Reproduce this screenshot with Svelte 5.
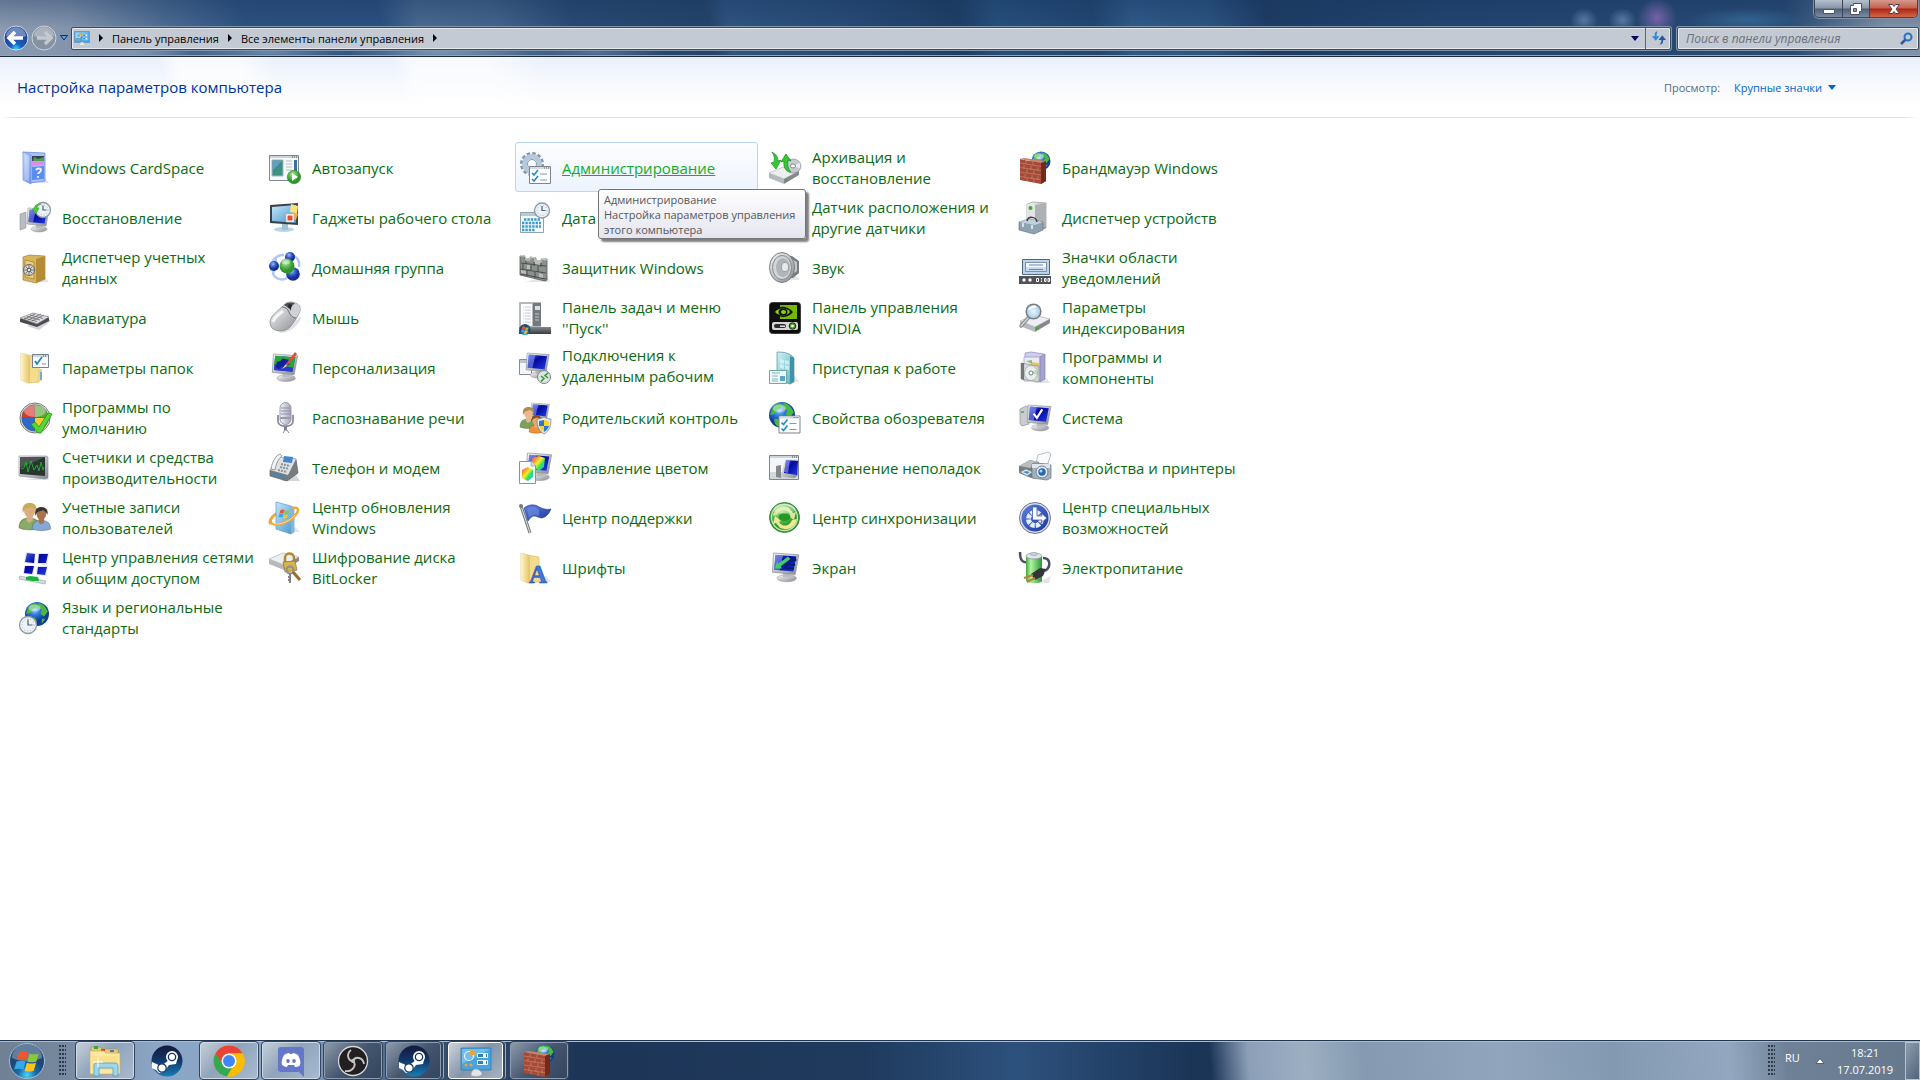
<script>
    const applets = [
        ["cardspace", "Windows CardSpace"],
        ["autoplay", "Автозапуск"],
        ["admin", "Администрирование"],
        ["backup", "Архивация и\nвосстановление"],
        ["firewall", "Брандмауэр Windows"],
        ["recovery", "Восстановление"],
        ["gadgets", "Гаджеты рабочего стола"],
        ["date", "Дата"],
        ["sensor", "Датчик расположения и\nдругие датчики"],
        ["devmgr", "Диспетчер устройств"],
        ["vault", "Диспетчер учетных\nданных"],
        ["homegroup", "Домашняя группа"],
        ["defender", "Защитник Windows"],
        ["sound", "Звук"],
        ["tray", "Значки области\nуведомлений"],
        ["keyboard", "Клавиатура"],
        ["mouse", "Мышь"],
        ["startmenu", "Панель задач и меню\n''Пуск''"],
        ["nvidia", "Панель управления\nNVIDIA"],
        ["indexing", "Параметры\nиндексирования"],
        ["folders", "Параметры папок"],
        ["personal", "Персонализация"],
        ["remote", "Подключения к\nудаленным рабочим"],
        ["welcome", "Приступая к работе"],
        ["programs", "Программы и\nкомпоненты"],
        ["defaults", "Программы по\nумолчанию"],
        ["speech", "Распознавание речи"],
        ["parental", "Родительский контроль"],
        ["internet", "Свойства обозревателя"],
        ["system", "Система"],
        ["perf", "Счетчики и средства\nпроизводительности"],
        ["phone", "Телефон и модем"],
        ["color", "Управление цветом"],
        ["trouble", "Устранение неполадок"],
        ["printers", "Устройства и принтеры"],
        ["users", "Учетные записи\nпользователей"],
        ["update", "Центр обновления\nWindows"],
        ["action", "Центр поддержки"],
        ["sync", "Центр синхронизации"],
        ["access", "Центр специальных\nвозможностей"],
        ["network", "Центр управления сетями\nи общим доступом"],
        ["bitlocker", "Шифрование диска\nBitLocker"],
        ["fonts", "Шрифты"],
        ["display", "Экран"],
        ["power", "Электропитание"],
        ["region", "Язык и региональные\nстандарты"],
    ];

    const tasks = [
        ["explorer", "Проводник", "light"],
        ["steam", "Steam", "flat"],
        ["chrome", "Google Chrome", "light"],
        ["discord", "Discord", "light"],
        ["obs", "OBS Studio", "dark"],
        ["steam", "Steam", "dark stack"],
        ["control", "Панель управления", "active stack"],
        ["firewall", "Брандмауэр Windows", "dark"],
    ];

    // shared icon parts
    const monitor = (x, y, s, extra = "") => `<g transform="translate(${x} ${y}) scale(${s})">
        <ellipse cx="14" cy="21" rx="8" ry="3" fill="url(#silver)" stroke="#999" stroke-width=".5"/>
        <path d="M11 15h6v5h-6z" fill="#b8bcc2"/>
        <path d="M3 0 24 1.500 21 18 2 16z" fill="url(#silver)" stroke="#8d9299" stroke-width=".6"/>
        <path d="M4.500 1.500 22 3 19.500 15.500 3.500 14z" fill="url(#screen)"/>
        <path d="M4.500 1.500 11 2 8 14.300 3.500 14z" fill="#9db4ff" opacity=".5"/>${extra}</g>`;
    const globe = (cx, cy, r) => `<g transform="translate(${cx} ${cy}) scale(${r / 10})">
        <circle r="10" fill="url(#globe)"/>
        <path d="M-7-6c2-3 6-3 7-2l-1 3-3 1-1 3-4 1zM1-9c4 0 7 4 8 7l-3 4-3-2 1-4-3-1zM-6 3l4 0 2 3-3 3c-2-1-3-3-3-6zM4 4l3 0-3 4z" fill="#49b93f"/>
        <ellipse cx="-2" cy="-5" rx="5" ry="3" fill="#fff" opacity=".4"/></g>`;
    const clock = (cx, cy, r) => `<circle cx="${cx}" cy="${cy}" r="${r}" fill="#edf3f8" stroke="#8d9aa6" stroke-width="1.300"/>
        <circle cx="${cx}" cy="${cy}" r="${r - 2.5}" fill="none" stroke="#9fb0bf" stroke-width="1" stroke-dasharray="1 2"/>
        <path d="M${cx} ${cy - r + 3}V${cy}H${cx + r - 4}" fill="none" stroke="#4b5f73" stroke-width="1.200"/>`;
    const checklist = (x, y) => `<g transform="translate(${x} ${y})">
        <path d="M.5.5h21v17H.5z" fill="#fdfefe" stroke="#7c858f"/>
        <path d="M1 1h20v2H1z" fill="#d4dbe3"/><path d="M15 2h1m1 0h1m1 0h1" stroke="#667"/>
        <path d="M3 7l2 2 4-5M3 13l2 2 4-5" fill="none" stroke="#1e8fc4" stroke-width="1.600"/>
        <path d="M11 8h7M11 14h7" stroke="#8b8fb0" stroke-width="1.200"/></g>`;
    const folder = `<path d="M2 1l7 2v28l-7-3z" fill="url(#folder)" stroke="#d3b45f" stroke-width=".6"/>
        <path d="M9 3l11 2v25l-11 1z" fill="#f3dc8c" stroke="#d3b45f" stroke-width=".6"/>
        <path d="M2 1l5 1 4 3v25l-2 1-7-3z" fill="url(#folder)"/>`;
    const wall = `<path d="M1 7l9 2 17 1v19l-5 3L1 28z" fill="#a54a36"/>
        <path d="M1 7l4-1 22 3-5 2z" fill="#c98370"/><path d="M22 11l5-2v20l-5 3z" fill="#74291c"/>
        <path d="M1 11l21 3.500M1 15.500l21 3M1 20l21 3M1 24.500l21 3.200M7 8v4m7-3v4m-9 0v4m7-3v4m7-3v4M8 17v4m7-3v4m-9 0v4m7-3v4m6-3v4M8 26v3m7-2v4" stroke="#d89e8c" stroke-width=".6" opacity=".8" fill="none"/>`;
    const flag = (x, y, s) => `<g transform="translate(${x} ${y}) scale(${s})">
        <path d="M1 2c3-2 5-1 8 0L7 9C5 8 3 8-1 9z" fill="#f0562c"/><path d="M10 3c3 1 5 1 8 0l-2 7c-3 1-5 1-8 0z" fill="#8cc63f"/>
        <path d="M-1.300 10c3-1 5-1 8 0l-2 7c-3-1-5-1-8 0z" fill="#35a7e8"/><path d="M7.700 11c3 1 5 1 8 0l-2 7c-3 1-5 1-8 0z" fill="#fcc321"/></g>`;
    const drive = (x, y) => `<g transform="translate(${x} ${y})"><path d="M0 8L14 2l16 4-15 8z" fill="#eceef0" stroke="#a6a9ad" stroke-width=".6"/>
        <path d="M0 8l15 6v5L0 13z" fill="#b5b8bd"/><path d="M15 14l15-8v4l-15 9z" fill="#85898e"/><path d="M16 15l3-1v2l-3 1z" fill="#3fae2a"/></g>`;
    const person = (x, y, s, hair, skin, shirt) => `<g transform="translate(${x} ${y}) scale(${s})">
        <path d="M0 20c0-6 3-8 8-8s9 2 9 8c-4 2-13 2-17 0z" fill="${shirt}" stroke="#0003"/>
        <path d="M6 9h5v5l-3 2-2-2z" fill="${skin}"/><ellipse cx="8.500" cy="6" rx="4.500" ry="5.500" fill="${skin}"/>
        <path d="M3 8C2 2 5 0 8.500 0S15 2 14 7c-1-2-2-3-4-4-3 1-5 1-6 3z" fill="${hair}"/></g>`;

    const icons = {
        cardspace: `<path d="M8 31h22l-4-6z" fill="#bbb" opacity=".4"/><path d="M4 0l22 1v28l-15 2z" fill="#a9c3f7" stroke="#5c7fd8" stroke-width=".7"/>
            <path d="M13 4l12 0v5l-12 0z" fill="#39405f"/><path d="M15 5l4 2 6-2v4H14z" fill="#4ba24b"/><path d="M13 9h12v4l-12 1z" fill="#df8bea"/>
            <path d="M13 15l12-1v13l-12 1z" fill="#5b8cf0"/><path d="M17 18c1-2 5-2 5 0s-3 3-3 4m0 2v2" stroke="#eef" stroke-width="1.800" fill="none"/>
            <path d="M4 0l8 3v29l-8-4z" fill="url(#pane)" stroke="#6f90de" stroke-width=".7"/><path d="M6 3l4 2v24l-4-2z" fill="#fff" opacity=".25"/>`,
        autoplay: `<path d="M.500 3.500h29v25H.500z" fill="#f7f8f9" stroke="#7e868e"/><path d="M1 4h28v2H1z" fill="#ccd3da"/><path d="M23 5h1m1 0h1m1 0h1" stroke="#445"/>
            <path d="M3 8h11v16H3z" fill="#3f8f82" stroke="#9fb6c9"/><path d="M4 9h9L4 18z" fill="#5e9fd0"/><path d="M17 9h6M17 12h6M17 15h6M17 18h6" stroke="#b5bcc4"/>
            <path d="M25 8h3v12h-3z" fill="#3b6ea5"/><circle cx="25" cy="25" r="6.700" fill="url(#green)" stroke="#2c8c1c" stroke-width=".6"/><path d="M23 21l6 4-6 4z" fill="#fff"/>`,
        admin: `<circle cx="13" cy="12" r="9" fill="none" stroke="#7f95ad" stroke-width="6" stroke-dasharray="3 1.700"/><circle cx="13" cy="12" r="7.500" fill="none" stroke="#b7c8da" stroke-width="5"/>
            <circle cx="13" cy="12" r="4.500" fill="#fafcff" stroke="#8296ab"/>${checklist(10, 14)}`,
        backup: `${drive(0, 13)}<ellipse cx="24" cy="14" rx="8" ry="7" fill="#c6c9cf" stroke="#85898f" stroke-width=".6"/><path d="M24 14l7-3v5z" fill="#eef0f3"/><ellipse cx="24" cy="14" rx="2.500" ry="2" fill="#fff" stroke="#888"/>
            <path d="M3 0c4 2 6 5 6 9l3-1-5 9-5-6 3-1c1-4 0-7-2-10z" fill="#35c735" stroke="#158a1b" stroke-width=".7"/><path d="M12 10l5-8 5 7-3-1c-1 5 0 9 3 12-5 0-8-5-7-11z" fill="#35c735" stroke="#158a1b" stroke-width=".7"/>`,
        firewall: `${globe(22, 9, 9.5)}${wall}`,
        recovery: `<path d="M1 12l6-2v16l-6 2z" fill="#b8bcc2" stroke="#888" stroke-width=".5"/><g>${monitor(6, 6, 1)}</g>${clock(24, 8, 7.5)}
            <path d="M22 2c-6 0-7 3-7 5h-2l4 5 3-6h-2c0-2 1-3 4-4z" fill="#4fc934" stroke="#279a1a" stroke-width=".5"/>`,
        gadgets: `<ellipse cx="15" cy="27.500" rx="10" ry="2.500" fill="#bcd5e6"/><path d="M13 22h6v6h-6z" fill="#9fc2d8"/><path d="M1 3l28-2v22L1 21z" fill="#39414b"/><path d="M3 5l24-2v18L3 19z" fill="url(#sky)"/>
            <path d="M22 2l7 2-1 8-7-2z" fill="#ffdf7a"/><path d="M24 10l5 2-2 6-5-2z" fill="#f0ac62"/><path d="M17 12h8v8h-8z" fill="#fff" stroke="#aaa" stroke-width=".5"/><path d="M18.500 13.500h5v5h-5z" fill="#e2502c"/>`,
        date: `<path d="M1.500 10.500h23v20h-23z" fill="#f5fafd" stroke="#8ea4b2"/><path d="M2 11h22v3H2z" fill="#b9cad5"/>
            <path d="M5 17.500h17M3 21h19M3 24.500h19M3 28h13" stroke="#3c9ad0" stroke-width="2.600" stroke-dasharray="2.400 1"/>${clock(23, 8.5, 7.5)}`,
        sensor: `<circle cx="16" cy="16" r="12" fill="url(#globe)"/>`,
        devmgr: `<path d="M8 2l6-2 13 1v25l-6 2-13-3z" fill="url(#silver)" stroke="#888" stroke-width=".6"/><path d="M8 2l8 1v22l-8-2z" fill="#e2e4e6"/><path d="M16 3l11-2v24l-11 2z" fill="#aeb1b5"/>
            <circle cx="11.500" cy="6" r="2" fill="#3fae2a"/><path d="M0 20l10-3 14 3v8l-9 4-15-4z" fill="#8ea3b1" stroke="#546b7a" stroke-width=".6"/>
            <path d="M0 20l10-3 14 3-8 3z" fill="#c2d1da"/><path d="M8 19c1-5 9-5 10 1" fill="none" stroke="#3b4247" stroke-width="1.500"/><path d="M4 21v4m9-2v4" stroke="#eef" stroke-width="1.600"/>`,
        vault: `<path d="M10 30h20l-4-5z" fill="#bbb" opacity=".4"/><path d="M4 5l6-2 16 1v23l-9 4-13-3z" fill="#d8b45a" stroke="#94742c" stroke-width=".6"/><path d="M17 7l9-3v23l-9 4z" fill="#b38c35"/>
            <path d="M6 8l9 2v17l-9-2z" fill="#e9cc7c" stroke="#8e7030" stroke-width=".6"/><circle cx="10" cy="18" r="5.500" fill="#d4d4d0" stroke="#666" stroke-width="1"/><path d="M10 13v10M5 18h10M7 15l6 6m0-6l-6 6" stroke="#666" stroke-width=".8"/><circle cx="10" cy="18" r="1.800" fill="#eee" stroke="#555"/>`,
        homegroup: `<path d="M15 3a12 12 0 0 0-12 16M7 6l-3 16c4 7 11 6 14 4M20 3c8 0 11 6 10 12" fill="none" stroke="#b2c7f0" stroke-width="2.500"/>
            <circle cx="21" cy="5" r="5" fill="url(#ball)"/><circle cx="5" cy="14" r="5" fill="url(#ball)"/><circle cx="24" cy="22" r="6.800" fill="url(#ball)"/><circle cx="18" cy="14" r="7.500" fill="url(#green)"/><ellipse cx="17" cy="10" rx="4" ry="2.500" fill="#fff" opacity=".45"/>`,
        defender: `<path d="M6 30h25l-3-6z" fill="#bbb" opacity=".4"/><path d="M1 4h5v3h5V5l6 1v3h5V7h6v21l-2 1L1 23z" fill="#8b918c" stroke="#454b49" stroke-width=".7"/>
            <path d="M1 4h4l2 1v3h4V5l5 1v4h6V7l6 1" fill="none" stroke="#d3d8d2"/><path d="M2 11l25 3M1 17l26 4M2 22l25 5M7 9v3m8-2v4m7-3v4M4 12v5m8-4v5m7-4v6M8 18v6m8-4v6m7-5v6" stroke="#414846" stroke-width=".9" fill="none"/>
            <path d="M8 13l3 0v4l-3 0zM16 8l5 1v4l-5-1zM2 18l5 1v3l-5-1zM20 21l4 1v4l-4-1z" fill="#b9beb8"/>`,
        sound: `<path d="M12 28h19l-6-6z" fill="#bbb" opacity=".4"/><path d="M15 4h8l7 5v12l-6 5h-8z" fill="#777c80"/><path d="M20 6l8 4v9l-6 4z" fill="#c3c7ca"/><ellipse cx="13" cy="15.500" rx="12.500" ry="15" fill="url(#silver)" stroke="#777c80"/>
            <ellipse cx="13" cy="15.500" rx="9.500" ry="12" fill="#d3d7da" stroke="#868b90"/><ellipse cx="14" cy="15.500" rx="7" ry="9.500" fill="#aeb4b9"/><ellipse cx="16" cy="15" rx="3.500" ry="4.500" fill="#e7eaec" stroke="#7d8388" stroke-width=".6"/>`,
        tray: `<path d="M3.500 7.500h27v15h-27z" fill="#bed3ea" stroke="#50677e"/><path d="M6.500 10.500h21v9h-21z" fill="#f6fafd" stroke="#7890a8"/><path d="M7 15h20v4H7z" fill="#c6dcf2"/><path d="M10 13h14M10 17.500h14" stroke="#5d86b2"/>
            <path d="M0 24h32v8H0z" fill="#4f5356"/><circle cx="5" cy="28" r="1.700" fill="#fff"/><circle cx="11" cy="28" r="1.700" fill="#fff"/><path d="M17.500 26.500h2v3h-2zM25.500 26.500h1.500v3h-1.500zM29 26.500h1.500v3H29z" fill="none" stroke="#fff"/><path d="M22.500 26v1.500m0 1v1.500" stroke="#fff" stroke-width="1.200"/>`,
        keyboard: `<path d="M8 24l12 4 12-9-2-2z" fill="#aaa" opacity=".5"/><path d="M1 17l13-5 16 4v3L18 25 1 20z" fill="#4b4c50"/><path d="M1 16l13-5 16 4-12 7z" fill="#dddee1" stroke="#6c6d70" stroke-width=".6"/>
            <path d="M5 16l13 3.500M8 14.500l13 3.500M11 13l13 3.500M9 18l13-6m-9 7l12-6M5 17l11-5" stroke="#66686d" stroke-width=".8"/>`,
        mouse: `<path d="M8 28c8 0 17-5 23-14l1 3c-5 9-13 14-20 14z" fill="#aaa" opacity=".35"/><path d="M1 20C1 14 9 9 14 4c3-4 8-5 12-3 4 1 6 4 5 8-2 6-6 11-9 15-4 5-11 6-16 4-3-1-5-4-5-8z" fill="url(#silver)" stroke="#7b7e83" stroke-width=".7"/>
            <path d="M14 4c4-4 8-4 12-3 4 2 6 4 5 8-1 3-3 5-4 7-4 0-5-3-7-6-1-2-5-3-6-6z" fill="#cfd1d4"/><path d="M13 5c3 0 6 2 7 5s4 6 7 6" fill="none" stroke="#66696e" stroke-width="1"/>
            <path d="M15 3c3-3 7-3 11-2l-4 4 0 4c-2-3-4-4-7-6z" fill="#4a4c51"/><path d="M20 2l3 1-1 4-3-2z" fill="#25262a"/>
            <path d="M4 20c1-5 6-8 10-11" fill="none" stroke="#fff" stroke-width="3" opacity=".8"/>`,
        startmenu: `<path d="M0 0h22v26H0z" fill="#b5babf"/><path d="M2 2h11v22H2z" fill="#fff"/><path d="M4 5h1m1 0h6M4 8h1m1 0h6M4 11h1m1 0h6M4 14h1m1 0h6M4 17h1m1 0h6M4 20h1m1 0h6" stroke="#b3bad4" stroke-width=".8"/>
            <path d="M14 1h8v23h-8z" fill="#74797d"/><path d="M16 4h5v4h-5z" fill="#dcdfe2"/><path d="M16 12h4M16 15h4M16 18h4" stroke="#d9dcde" stroke-width=".8"/><path d="M0 25h32v7H0z" fill="url(#dark)"/>
            <circle cx="6" cy="27.500" r="5.500" fill="url(#orb)"/>${flag(3, 24, 0.38)}`,
        nvidia: `<rect x=".5" y=".5" width="31" height="31" rx="3" fill="#0c0d0c" stroke="#3c3e3c"/><path d="M3 4h24v13H3z" fill="#111"/><path d="M11 3h17v14H11z" fill="#76b900"/>
            <path d="M4 10c3-4 7-6 12-5 4 1 6 3 8 5-3 4-7 5-11 5-4-1-7-3-9-5z" fill="#0e130a"/><path d="M6 10c3-4 11-5 15 0-4 5-11 4-15 0z" fill="#8fd117"/><ellipse cx="14" cy="10" rx="4.500" ry="3.500" fill="#0e130a"/><ellipse cx="14.500" cy="10" rx="2.500" ry="1.900" fill="#8fd117"/>
            <rect x="3" y="20" width="26" height="8" rx="2" fill="#d5d8d6"/><rect x="5" y="22" width="12" height="4" rx="2" fill="#2b2d2b"/><path d="M11 23.500h5v1.500h-5z" fill="#ddd"/><circle cx="23.500" cy="24" r="3.300" fill="#4da32a" stroke="#222"/><circle cx="23.500" cy="24" r="1.300" fill="#fff"/>`,
        indexing: `${drive(1, 11)}<path d="M10 15l-8 9" stroke="#84878c" stroke-width="3.500" stroke-linecap="round"/><path d="M10 15l-8 9" stroke="#d4d6d9" stroke-width="1.500" stroke-linecap="round"/>
            <circle cx="14.500" cy="9.500" r="7.300" fill="url(#lens)" stroke="#777c82" stroke-width="1.500"/><path d="M10 8c1-3 5-4 7-3" stroke="#fff" stroke-width="2" fill="none"/>`,
        folders: `${folder}<path d="M13.500 2.500h16v13h-16z" fill="#fbfcfd" stroke="#75818d"/><path d="M14 3h15v2H14z" fill="#cfd8e0"/><path d="M24 4h1m1 0h1" stroke="#445"/><path d="M16 9l2 3 5-7" fill="none" stroke="#1f88c2" stroke-width="1.800"/><path d="M23 12h4" stroke="#888"/>
            <path d="M20 17h3v11l-5 3" fill="#eed27e"/><path d="M22 20v8" stroke="#5aa0dc" stroke-width="1.500"/>`,
        personal: `${monitor(1, 2, 1.15, `<path d="M4.500 1.500L22 3l-2 10L3.500 10z" fill="#25a836"/><path d="M4 9l16 3-.500 3.500L3.500 14z" fill="#2b3bd0"/><path d="M6 7l3-1 2-2 5 1 1 4-3 2-4 0-2 2-3-1z" fill="#12219b"/>`)}
            <path d="M26 0l-9 12 1 2 10-12z" fill="#e04c35"/><path d="M17 12l-4 5 5-3z" fill="#f5d9a4"/>`,
        remote: `<path d="M.500 7.500h12v15H.500z" fill="#f4f6f9" stroke="#838c97"/><path d="M1 8h11v3H1z" fill="#bac6d5"/>${monitor(5, 1, 1.05)}
            <circle cx="25" cy="25" r="6.500" fill="#dfe3e5" stroke="#7d8286"/><path d="M22 24l3 2.500-3 3M29 21l-3 2.500 3 2.500" fill="none" stroke="#2d9b30" stroke-width="1.500"/>`,
        welcome: `<path d="M14 30h16l-4-6z" fill="#bbb" opacity=".4"/><path d="M8 0c7 0 12 1 15 4l2 2v24l-4 2L8 28z" fill="url(#teal)" stroke="#51919f" stroke-width=".7"/><path d="M21 4l4 2v23l-4 3z" fill="#3d93a8"/>
            <path d="M11 7l4 1v4l-4-1zM16 8l4 1v4l-4-1zM11 12l4 1v4l-4-1zM16 13l4 1v4l-4-1z" fill="#d5f4f7" opacity=".8"/><path d="M.500 18.500h17v13H.500z" fill="#eef9fa" stroke="#6fa9ab"/><path d="M3 21h8M3 24h6M3 27h6M3 29h6" stroke="#7bb8bd"/><path d="M11 24h5v5h-5z" fill="#55a6ca"/>`,
        programs: `<path d="M14 31h17l-4-5z" fill="#bbb" opacity=".4"/><path d="M6 1l6-1 13 2v4H6z" fill="#cfcdea" stroke="#8f8dba" stroke-width=".7"/><path d="M5 5h16v24H5z" fill="#ebeaf7" stroke="#9b99c3" stroke-width=".7"/><path d="M21 5l5-3v25l-5 3z" fill="#a6a4cd" stroke="#8583b4" stroke-width=".7"/>
            <path d="M12 10l8 1v12h-8z" fill="#f3c466"/><path d="M7 9l6-1v4z" fill="#7cc576"/><path d="M2 11l18 3v16L2 27z" fill="#cfd5d3" opacity=".85" stroke="#767d7b" stroke-width=".6"/><path d="M2 11h3v17l-3-1z" fill="#70777a"/>
            <ellipse cx="12" cy="21" rx="6.500" ry="7.500" fill="#e9eeec" stroke="#99a19d" stroke-width=".7"/><path d="M12 21l6-4v6z" fill="#b5dcc9"/><circle cx="12" cy="21" r="2" fill="#fff" stroke="#777"/>`,
        defaults: `<circle cx="16" cy="16" r="15" fill="#e6e8e9" stroke="#6e7478"/><circle cx="16" cy="16" r="13.500" fill="#4a5a55"/><path d="M15.500 15.500V3A13 13 0 0 0 3 15.500z" fill="#d83b2c"/><path d="M16 15.500V3a13 13 0 0 1 13 12.500z" fill="#5fa838"/><path d="M15.500 16v13A13 13 0 0 1 3 16z" fill="#2f6ac9"/><path d="M16 16v13a13 13 0 0 0 13-13z" fill="#f6cd34"/>
            <ellipse cx="16" cy="9" rx="11" ry="6" fill="#fff" opacity=".35"/><path d="M12 22l4-2 4 5 9-14 4 1-11 19h-3z" fill="#56d630" stroke="#27931b" stroke-width=".8"/>`,
        speech: `<path d="M9 13v6c0 7 15 7 15 0v-6" fill="none" stroke="#8b8c9c" stroke-width="1.800"/><path d="M16.500 24v4" stroke="#80818f" stroke-width="3"/><path d="M14 31l2-3h2l2 3" fill="none" stroke="#80818f"/>
            <rect x="11" y=".5" width="11" height="22" rx="5.500" fill="url(#lilac)" stroke="#86879a" stroke-width=".8"/><path d="M12 6h9M12 9h9M12 12h9" stroke="#8c8da0" stroke-width="1"/><path d="M11 15h11v2H11z" fill="#9a9bab"/>`,
        parental: `${monitor(10, 1, 0.85)}${person(1, 5, 1, "#b08b4a", "#e8b98b", "#77a35c")}${person(10, 13, 0.85, "#8a4f1f", "#e8a873", "#ee9138")}
            <path d="M18 17c3 0 5-1 7-2 2 1 4 2 7 2 0 8-2 12-7 15-5-3-7-7-7-15z" fill="#e6eaf0" stroke="#697a8e" stroke-width=".7"/><path d="M20 19c2 0 4-1 5-1v6h-5zM25 24h5c-1 3-3 5-5 6z" fill="#2a79d0"/><path d="M25 18c1 0 3 1 5 1v5h-5zM20 24h5v6c-2-1-4-3-5-6z" fill="#fbd32c"/>`,
        internet: `${globe(13, 13, 13)}${checklist(9.5, 13.5)}`,
        system: `<path d="M1 7l6-3 3 1v17l-7 2-2-2z" fill="#c9ccd0" stroke="#80858b" stroke-width=".6"/><path d="M2 10h3" stroke="#56ad35" stroke-width="1.500"/>${monitor(6, 3, 1.08, `<path d="M8 8l3 4 5-8" fill="none" stroke="#fff" stroke-width="2"/>`)}`,
        perf: `<path d="M6 28h24l-2-4z" fill="#bbb" opacity=".4"/><path d="M0 4h27l2 1v21l-3 1-26-3z" fill="url(#silver)" stroke="#868b8f" stroke-width=".6"/><path d="M1 5h25v19L1 22z" fill="#2c3432"/><path d="M1 5h25L1 16z" fill="#65706c" opacity=".6"/>
            <path d="M2 17l3-1 2-6 2 10 3-11 3 9 3-5 2 6 2-9 2 8 1-3" fill="none" stroke="#19b82b" stroke-width=".9"/>`,
        phone: `<path d="M12 29h19l-4-6z" fill="#999" opacity=".4"/><path d="M1 18L10 5l17 2 2 14-11 8-17-5z" fill="#767c81" stroke="#4b5256" stroke-width=".6"/><path d="M1 18L10 5l17 2-8 16z" fill="#dfe2e4"/><path d="M15 4l9 1-1 6-9-1z" fill="#4287cc"/>
            <path d="M12 12l9 2M11 15l9 2M9 18l9 2" stroke="#8b9297" stroke-width="2" stroke-dasharray="2 1"/><path d="M2 17C3 10 7 3 11 2l2 2C9 7 7 12 6 18z" fill="#f2f3f4" stroke="#75797d" stroke-width=".7"/><path d="M4 22l12 3" stroke="#3687cb" stroke-width="2.500" stroke-dasharray="2 1"/>`,
        color: `${monitor(5, 1, 1.15)}<path d="M13 6l7-2 6 2-1 9-5 4-6-4z" fill="url(#rainbow)"/><path d="M.500 9.500h12l4 4v18H.500z" fill="#fdfdfd" stroke="#8f8f98"/><path d="M12 9v5h5" fill="#ddd" stroke="#8f8f98" stroke-width=".7"/><path d="M3 18l6-3 5 3v7l-5 4-6-3z" fill="url(#rainbow)"/>`,
        trouble: `<path d="M.500 3.500h29v24H.500z" fill="#f4f6f8" stroke="#7d858d"/><path d="M1 4h28v2H1z" fill="#ccd4dc"/><path d="M23 5h1m1 0h1m1 0h1" stroke="#445"/><path d="M1 20h28v7H1z" fill="#d3d8df"/><path d="M7 14l5-1v13l-5-1z" fill="#84888d"/><path d="M8 16h1" stroke="#4cd12b"/>
            <path d="M16 7l13 1v15l-3 3-14-1z" fill="url(#silver)"/><path d="M17 8l12 1-1 14-13-2z" fill="url(#screen)"/><path d="M17 8h4l-2 13-4-1z" fill="#aebeff" opacity=".5"/>`,
        printers: `<path d="M19 3l10-3 3 2-4 12-12 0z" fill="#fafbfc" stroke="#9ba0a6" stroke-width=".7"/><path d="M0 14l11-6 9 2v14l-8 2-12-5z" fill="#777c81"/><path d="M0 14l11-6 9 2-9 6z" fill="#b9bdc1"/><path d="M1 20l6-3 7 3-6 4z" fill="#dcecf7" stroke="#666" stroke-width=".5"/><path d="M4 20l3-1 4 1-3 2z" fill="#3a93c6"/>
            <path d="M13 12l3-1 13 1 3 1v13l-4 2-15-2z" fill="#a3b1bc" stroke="#64727e" stroke-width=".7"/><path d="M13 12h18v4H13z" fill="#dfe6eb"/><circle cx="23" cy="20" r="6" fill="#e1e7eb" stroke="#74828d"/><circle cx="23" cy="20" r="3.700" fill="#2665b0"/><circle cx="22" cy="19" r="1.500" fill="#a5dcff"/>`,
        users: `${person(0, 1, 1.25, "#c7ac52", "#d9ae82", "#87ac63")}${person(13, 5, 1.1, "#37332e", "#a9744d", "#83abd8")}`,
        update: `<path d="M13 30h18l-5-5z" fill="#bbb" opacity=".4"/><path d="M2 22c-4-5 8-14 18-16" fill="none" stroke="#f1a638" stroke-width="3"/><path d="M7 0l15 4 3 2v24l-3 2L7 27z" fill="url(#sky)" stroke="#5a9cc5" stroke-width=".7"/><path d="M22 4l3 2v24l-3 2z" fill="#7eb9da"/>${flag(11, 7, 0.5)}
            <path d="M1 18c1 9 20 3 27-7 3-5-1-6-5-5" fill="none" stroke="#f1a638" stroke-width="2.500"/><path d="M3 20c4 5 17 0 23-7" fill="none" stroke="#ffe0a2"/>`,
        action: `<path d="M2 4l9 27" stroke="#777d82" stroke-width="3"/><path d="M2 4l9 27" stroke="#d9dcde" stroke-width="1"/><circle cx="2" cy="4" r="2" fill="#777d82"/>
            <path d="M5 6C10 2 16 2 20 5c4 2 8 3 12 2-2 5-5 8-9 9-3 0-5-2-8-2-2 0-4 2-6 5z" fill="url(#navy)" stroke="#223c96" stroke-width=".6"/><path d="M8 7c4-3 8-3 12 0v7c-4-2-7-1-10 2z" fill="#7b98ec" opacity=".5"/>`,
        sync: `<circle cx="15.500" cy="15.500" r="15" fill="url(#green)" stroke="#3c8a3c"/><circle cx="15.500" cy="15.500" r="13" fill="none" stroke="#c4e8b5" stroke-width="1.300"/>
            <path d="M4 14C5 6 13 2 20 6l4 5 3-1-2 8-7-5 3-1c-4-6-11-4-13 1z" fill="#d6e89d"/><path d="M28 17c-2 9-9 12-17 9l-4-5-3 1 2-8 6 5-2 1c4 6 11 4 13-2z" fill="#f1e894"/><ellipse cx="15.500" cy="15" rx="6" ry="4" fill="#239a23"/><ellipse cx="15.500" cy="7" rx="11" ry="5" fill="#fff" opacity=".3"/>`,
        access: `<circle cx="16" cy="16" r="15.500" fill="#dce1ed" stroke="#6d748a"/><circle cx="16" cy="16" r="13.500" fill="url(#navy)"/><circle cx="16" cy="17" r="6.500" fill="none" stroke="#e8edfa" stroke-width="5" stroke-dasharray="4.100 1"/>
            <path d="M13.500 5h4.500v9h5l-1-3 6 5-6 5 1-3h-9.500z" fill="#fff" stroke="#365bc1" stroke-width=".8"/>`,
        network: `<path d="M7 0l10 1-1 11-11-1zM19 1l11 0-2 12-10-1zM6 13l10 1-2 9-10-1zM18 14l11 0-2 10-10-1z" fill="#e0e5f2"/><path d="M8 1l8 1-1 9-9-1zM20 2l9 0-2 9-8 0zM6 14l9 0-2 8-8-1zM19 15l9 0-2 8-8-1z" fill="url(#screen)"/>
            <path d="M1 24l26 5-1 3-26-5z" fill="#d3dadb" stroke="#899495" stroke-width=".5"/><path d="M7 25l4-1 8 1 1 4-6 0-7-1z" fill="#18b33c"/>`,
        bitlocker: `${drive(0, -1)}<path d="M16 11V6c0-6 9-6 9 0v5" fill="none" stroke="#b08a2e" stroke-width="2.500"/><path d="M14 10l12-1 2 9-12 2z" fill="#d9b24a" stroke="#917022" stroke-width=".7"/><circle cx="21" cy="18" r="3.500" fill="none" stroke="#8c9093" stroke-width="2"/>
            <path d="M21 21v10m0-3h-2m2-3h-2" stroke="#7f8386" stroke-width="2"/><path d="M24 20l7 8" stroke="#96702a" stroke-width="3"/>`,
        fonts: `<path d="M12 30h20l-5-6z" fill="#bbb" opacity=".4"/>${folder}<text x="10" y="31" font-family="Liberation Serif, serif" font-weight="bold" font-size="25" fill="#3f78d8" stroke="#1d49a8" stroke-width=".6">A</text>`,
        display: `${monitor(1, 1, 1.2, `<path d="M10 5l12 1M11 9l10 1M12 12l8 1" stroke="#091e63" stroke-width="1.800"/><path d="M17 5l-8 6 1 2-6 0 2-6 1 2 8-6z" fill="#3bd16a"/>`)}`,
        power: `<path d="M18 31h12l2-7z" fill="#bbb" opacity=".4"/><path d="M1 0c0 9 3 11 8 10M24 6c8 0 8 9 2 13" fill="none" stroke="#4a4d68" stroke-width="2.500"/><path d="M7 4h16v25c-3 3-13 3-16 0z" fill="url(#battery)"/><ellipse cx="15" cy="4" rx="8" ry="3" fill="#e1e5e9" stroke="#888d93" stroke-width=".7"/><ellipse cx="15" cy="2" rx="3.500" ry="1.500" fill="#bfd8ec" stroke="#888" stroke-width=".5"/>
            <path d="M12 22l9-6 6 1-3 7-8 4z" fill="#33343c"/><path d="M14 23l-9 3m11 0l-8 4" stroke="#b3833c" stroke-width="2.200"/>`,
        region: `${globe(18, 12, 12)}${clock(9, 23, 8.5)}`,
        explorer: `<path d="M2 2h9l2 2h16v24H2z" fill="#e9ca6f" stroke="#b69542" stroke-width=".7"/><path d="M5 1h4v3H5z" fill="#31a843"/><path d="M12 4h4v2h-4z" fill="#d04c35"/><path d="M21 5h4v2h-4z" fill="#3f79cb"/>
            <path d="M1 6h14l2 2h14v21H1z" fill="#fbe9a3" stroke="#d0ae55" stroke-width=".7"/><path d="M3 11h26v14H3z" fill="#f8e08c"/><path d="M5 31V21c0-3 1-3 4-3h16c3 0 4 1 4 3v10h-5v-8H10v8z" fill="#9bd6ee" stroke="#4e9ec3" stroke-width=".8"/><path d="M9 12v10M4 17h10" stroke="#fff"/>`,
        steam: `<circle cx="16" cy="16" r="15.500" fill="url(#steam)"/><path d="M1 17l9 4 8-6v-4l6 1 2 3-1 4-7 1-5 7-5 1-3-3-4-2z" fill="#fff"/><circle cx="21" cy="12" r="6" fill="#fff"/><circle cx="21" cy="12" r="4.300" fill="#17335b"/><circle cx="21" cy="12" r="3" fill="#fff"/><circle cx="11" cy="23" r="4.200" fill="#fff" stroke="#17335b" stroke-width="1.200"/>`,
        chrome: `<circle cx="16" cy="16" r="15.500" fill="#fbbc05"/><path d="M16 16L2.600 8.300A15.500 15.500 0 0 0 14 31.400l6-10.400z" fill="#34a853"/><path d="M2.600 8.300A15.500 15.500 0 0 1 29.600 8.500H16a7.500 7.500 0 0 0-7 10z" fill="#ea4335"/><path d="M16 8.500h13.600A15.500 15.500 0 0 1 14 31.400L22.500 20z" fill="#fbbc05"/><circle cx="16" cy="16" r="7.500" fill="#fff"/><circle cx="16" cy="16" r="6" fill="#4285f4"/>`,
        discord: `<path d="M6 2h20c2 0 3 1 3 3v27l-5-5H6c-2 0-3-1-3-3V5c0-2 1-3 3-3z" fill="#6577c9"/><path d="M9 10c2-1 3-2 5-2l1 1h2l1-1c2 0 3 1 5 2 2 4 3 7 2 10-2 2-3 2-5 2l-1-2h-6l-1 2c-2 0-3-1-5-2-1-3 0-6 2-10z" fill="#fff"/><ellipse cx="13" cy="16" rx="1.800" ry="2" fill="#6577c9"/><ellipse cx="19" cy="16" rx="1.800" ry="2" fill="#6577c9"/>`,
        obs: `<circle cx="16" cy="16" r="14.500" fill="#211f20" stroke="#d8d8d8" stroke-width="1.300"/><path d="M16 16C11 16 9 9 14 5M16 16c2-5 10-4 11 3M16 16c4 4 0 11-8 10" fill="none" stroke="#c4c4c4" stroke-width="1.900"/><circle cx="16" cy="16" r="2" fill="#c4c4c4"/>`,
        control: `<path d="M1 3h30v22H1z" fill="#4ba3dc" stroke="#2c78ae" stroke-width=".8"/><path d="M2 4h28L2 19z" fill="#74bdea"/><circle cx="9" cy="11" r="4.500" fill="none" stroke="#e8f5fc" stroke-width="1.200"/><path d="M10 10V4a6 6 0 0 1 5 6z" fill="#f2a52b"/>
            <path d="M17.500 8.500h10v4h-10zM17.500 15.500h10v4h-10z" fill="#2f81bb" stroke="#e8f5fc"/><path d="M23 9h3v3h-3zM23 16h3v3h-3z" fill="#fff"/><circle cx="6" cy="20" r="1.500" fill="#f2a52b"/><circle cx="11" cy="20" r="1.500" fill="#f2a52b"/><path d="M11 30c0-3 2-6 5-6s6 3 6 5c0 3-11 3-11 1z" fill="#e3e5e8" stroke="#9ca1a6" stroke-width=".6"/>`,
    };

    let view = "large";
    let query = "";
</script>

{#snippet icon(name)}
    <svg class="icon" viewBox="0 0 32 32" aria-hidden="true">{@html icons[name]}</svg>
{/snippet}

<svg class="defs" aria-hidden="true">
    <defs>
        <linearGradient id="silver" x2="1" y2="1"><stop stop-color="#fcfcfd" /><stop offset="1" stop-color="#85888e" /></linearGradient>
        <linearGradient id="screen" x2="1" y2="1"><stop stop-color="#4863e2" /><stop offset=".4" stop-color="#0508a0" /><stop offset="1" stop-color="#1f3be0" /></linearGradient>
        <linearGradient id="folder" x2="1"><stop stop-color="#fdf4c4" /><stop offset="1" stop-color="#e3c266" /></linearGradient>
        <linearGradient id="pane" x2="1" y2="1"><stop stop-color="#cfdffc" /><stop offset="1" stop-color="#6c90e6" /></linearGradient>
        <linearGradient id="sky" x2="1" y2="1"><stop stop-color="#c4e6f7" /><stop offset="1" stop-color="#4796cc" /></linearGradient>
        <linearGradient id="teal" x2="1" y2="1"><stop stop-color="#d0f0f4" /><stop offset="1" stop-color="#59b1c1" /></linearGradient>
        <linearGradient id="lilac" x2="1"><stop stop-color="#f5f5fc" /><stop offset="1" stop-color="#a3a4b9" /></linearGradient>
        <linearGradient id="dark" x2="0" y2="1"><stop stop-color="#85898d" /><stop offset="1" stop-color="#383b3e" /></linearGradient>
        <linearGradient id="navy" x2="1" y2="1"><stop stop-color="#5f80e0" /><stop offset="1" stop-color="#1b3599" /></linearGradient>
        <linearGradient id="steam" x2="0" y2="1"><stop stop-color="#14183c" /><stop offset=".5" stop-color="#12386b" /><stop offset="1" stop-color="#1580b8" /></linearGradient>
        <linearGradient id="battery" x2="1"><stop stop-color="#43a63e" /><stop offset=".3" stop-color="#b2f3a2" /><stop offset="1" stop-color="#2b9736" /></linearGradient>
        <linearGradient id="rainbow" x2="1" y2="1">
            <stop stop-color="#ff3eb5" /><stop offset=".25" stop-color="#ff9c20" /><stop offset=".45" stop-color="#eaf32a" />
            <stop offset=".65" stop-color="#2fe15c" /><stop offset=".85" stop-color="#28c5f0" /><stop offset="1" stop-color="#5548ea" />
        </linearGradient>
        <radialGradient id="globe" cx=".4" cy=".3"><stop stop-color="#9bdcff" /><stop offset=".5" stop-color="#2c78d4" /><stop offset="1" stop-color="#103c95" /></radialGradient>
        <radialGradient id="ball" cx=".4" cy=".3"><stop stop-color="#a5c2fa" /><stop offset=".5" stop-color="#3f67d0" /><stop offset="1" stop-color="#172f93" /></radialGradient>
        <radialGradient id="green" cx=".4" cy=".3"><stop stop-color="#a3e694" /><stop offset="1" stop-color="#2c962a" /></radialGradient>
        <radialGradient id="lens"><stop stop-color="#eaf6ff" /><stop offset="1" stop-color="#a3c9ea" /></radialGradient>
        <radialGradient id="orb" cy=".9"><stop stop-color="#4ed5f5" /><stop offset=".5" stop-color="#176eac" /><stop offset="1" stop-color="#1d4873" /></radialGradient>
        <radialGradient id="nav" cy=".95"><stop stop-color="#35d4ff" /><stop offset=".45" stop-color="#1a5fc4" /><stop offset="1" stop-color="#1f4a9c" /></radialGradient>
    </defs>
</svg>

<div class="window">
    <header class="glass">
        <div class="caption">
            <div class="caption-buttons">
                <button class="minimize" aria-label="Свернуть"><svg viewBox="0 0 12 12"><path d="M.500 6.500h11v4H.500z" fill="#fff" stroke="#4a5568" /></svg></button>
                <button class="restore" aria-label="Свернуть в окно">
                    <svg viewBox="0 0 12 12"><path d="M3.500.500h8v8h-2v3h-9v-9h3z" fill="#fff" stroke="#4a5568" /><path d="M3.500 5.500h3v3h-3z" fill="#8c9bb0" stroke="#4a5568" /></svg>
                </button>
                <button class="close" aria-label="Закрыть"><svg viewBox="0 0 12 12"><path d="M.500 1.500h4L6 3.500l1.500-2h4L8 6l3.500 4.500h-4L6 8.500l-1.500 2h-4L4 6z" fill="#fff" stroke="#54404a" /></svg></button>
            </div>
        </div>
        <nav class="navbar">
            <button class="round" aria-label="Назад">
                <svg viewBox="0 0 26 26"><circle cx="13" cy="13" r="12" fill="url(#nav)" stroke="#d0dbe9" /><path d="M3 11a10 9 0 0 1 20 0c-5 2-15 2-20 0z" fill="#fff" opacity=".35" /><path d="M12 7l-6 6 6 6M7 13h13" fill="none" stroke="#fff" stroke-width="3.500" /></svg>
            </button>
            <button class="round" aria-label="Вперед">
                <svg viewBox="0 0 26 26"><circle cx="13" cy="13" r="12" fill="#8792a1" stroke="#cbd3de" /><path d="M3 11a10 9 0 0 1 20 0c-5 2-15 2-20 0z" fill="#fff" opacity=".3" /><path d="M14 7l6 6-6 6M19 13H6" fill="none" stroke="#c3c9d1" stroke-width="3.500" /></svg>
            </button>
            <button class="recent" aria-label="Последние страницы"><svg viewBox="0 0 8 6"><path d="M.500.500h7L4 5z" fill="#4fa0e8" stroke="#14335c" /></svg></button>
            <div class="address">
                {@render icon("control")}
                <span class="crumb-arrow"></span>
                <a href="#panel">Панель управления</a>
                <span class="crumb-arrow"></span>
                <a href="#all">Все элементы панели управления</a>
                <span class="crumb-arrow"></span>
                <button class="history" aria-label="Предыдущие расположения"><svg viewBox="0 0 8 5"><path d="M0 0h8L4 5z" fill="#00005c" /></svg></button>
                <button class="refresh" aria-label="Обновить">
                    <svg viewBox="0 0 16 14"><path d="M7 0C4 0 4 2 4 5H1l4 5 4-5H6c0-2 0-3 1-5z" fill="#3486d2" /><path d="M9 14c3 0 4-2 4-5h3l-4-5-4 5h3c0 2 0 3-2 5z" fill="#2059a6" /></svg>
                </button>
            </div>
            <div class="search">
                <input type="text" bind:value={query} placeholder="Поиск в панели управления" aria-label="Поиск в панели управления" />
                <svg viewBox="0 0 13 13"><circle cx="8" cy="5" r="3.500" fill="none" stroke="#2a74bf" stroke-width="2" /><path d="M5.500 7.500L1 12" stroke="#3458a0" stroke-width="2.500" /></svg>
            </div>
        </nav>
    </header>

    <div class="heading">
        <h1>Настройка параметров компьютера</h1>
        <div class="view">
            <label for="view">Просмотр:</label>
            <select id="view" bind:value={view}>
                <option value="large">Крупные значки</option>
            </select>
            <svg viewBox="0 0 8 5"><path d="M0 0h8L4 5z" fill="#0066cc" /></svg>
        </div>
    </div>

    <main>
        <ul class="applets">
            {#each applets as [name, label]}
                <li class:hovered={name == "admin"} class:long={name == "remote"}>
                    <a href="#{name}">
                        {@render icon(name)}
                        <span class="label">{label}</span>
                    </a>
                    {#if name == "admin"}
                        <div class="tooltip" role="tooltip">Администрирование<br />Настройка параметров управления<br />этого компьютера</div>
                    {/if}
                </li>
            {/each}
        </ul>
    </main>

    <footer class="taskbar">
        <button class="start" aria-label="Пуск">
            <svg viewBox="0 0 36 36"><circle cx="18" cy="18" r="17.500" fill="url(#orb)" stroke="#a9bccb" /><path d="M3 15a15 14 0 0 1 30 0c-8 4-22 4-30 0z" fill="#fff" opacity=".3" />{@html flag(9, 7, 1.15)}</svg>
        </button>
        <span class="grip"></span>
        <div class="tasks">
            {#each tasks as [name, label, kind]}
                <button class="task {kind}" aria-label={label}>{@render icon(name)}</button>
            {/each}
        </div>
        <span class="grip"></span>
        <span class="lang">RU</span>
        <button class="hidden-icons" aria-label="Отображать скрытые значки"><svg viewBox="0 0 10 6"><path d="M5 .500L9 5.500H1z" fill="#fff" stroke="#2c3b4c" stroke-width=".7" /></svg></button>
        <div class="clock">
            <span>18:21</span>
            <span>17.07.2019</span>
        </div>
        <button class="show-desktop" aria-label="Свернуть все окна"></button>
    </footer>
</div>

<style>
    :global(body) {
        margin: 0;
        background: #fff;
    }
    .window {
        display: flex;
        flex-direction: column;
        min-height: 100vh;
        font-family: "Open Sans", "Noto Sans", sans-serif;
        font-size: 11px;
        color: #000;
    }
    .defs {
        position: absolute;
        width: 0;
        height: 0;
    }
    button {
        display: flex;
        align-items: center;
        justify-content: center;
        padding: 0;
        border: none;
        background: none;
        font: inherit;
    }
    a {
        color: inherit;
        text-decoration: none;
    }
    .icon {
        flex: none;
        width: 32px;
        height: 32px;
        overflow: visible;
    }

    /* Glass frame with the caption buttons and the address bar */
    .glass {
        height: 56px;
        border-bottom: 1px solid #1b2a3f;
        box-shadow: inset 0 -1px 0 #8fa6bf;
        background:
            radial-gradient(20px 20px at 86.3% 18px, rgba(150, 110, 190, 0.7), transparent),
            radial-gradient(14px 12px at 84.5% 20px, rgba(140, 170, 205, 0.5), transparent),
            radial-gradient(14px 12px at 82.5% 20px, rgba(140, 170, 205, 0.5), transparent),
            radial-gradient(60px 12px at 91% 20px, rgba(70, 140, 190, 0.4), transparent),
            radial-gradient(60px 10px at 7% 52px, rgba(150, 170, 200, 0.6), transparent),
            radial-gradient(80px 10px at 14% 52px, rgba(150, 175, 205, 0.6), transparent),
            radial-gradient(110px 10px at 23% 52px, rgba(150, 175, 205, 0.6), transparent),
            radial-gradient(70px 10px at 31% 52px, rgba(130, 155, 190, 0.5), transparent),
            linear-gradient(rgba(20, 50, 95, 0.35), rgba(20, 50, 95, 0) 50%),
            linear-gradient(80deg, #8c9bb1 0, #8293ab 4%, #4c6b91 9%, #2d527f 13%, #2b5080 20%, #4a6a90 22%, #44648a 26%, #2a4a72 30%, #254468 37%, #2f547f 38%, #284c76 44%, #1f3e63 50%, #27507c 52%, #224670 57%, #2f5a88 59%, #2b5480 63%, #1e3c62 66%, #22446d 75%, #284b74 93%, #8091a7 98%, #8091a7 100%);
    }
    .caption {
        display: flex;
        justify-content: flex-end;
        height: 24px;
        padding-right: 2px;
    }
    .caption-buttons {
        display: flex;
        height: 17px;
        border: 1px solid #3a4656;
        border-top: none;
        border-radius: 0 0 5px 5px;
        box-shadow: 0 0 0 1px #8293a8;
        overflow: hidden;
    }
    .caption-buttons svg {
        width: 12px;
        height: 12px;
    }
    .minimize,
    .restore {
        width: 28px;
        border-right: 1px solid #3a4656;
        background: linear-gradient(#b4c0ce 0, #8996a8 48%, #4e6079 52%, #7b8ca3 100%);
    }
    .restore {
        width: 27px;
    }
    .close {
        width: 47px;
        background: linear-gradient(#d59a8c 0, #c4604f 48%, #ad2414 52%, #d4664a 100%);
    }
    .navbar {
        display: flex;
        align-items: center;
        height: 28px;
        padding-left: 2px;
    }
    .round {
        width: 28px;
    }
    .round svg {
        width: 26px;
        height: 26px;
    }
    .recent {
        width: 11px;
        margin-right: 2px;
    }
    .recent svg {
        width: 8px;
        height: 6px;
    }
    .address,
    .search {
        display: flex;
        align-items: center;
        box-sizing: border-box;
        height: 23px;
        border: 1px solid #3b4a5e;
        border-radius: 2px;
        background: #c3cad4;
        box-shadow:
            inset 0 0 0 1px #e6eaef,
            0 0 0 1px #7f93aa;
    }
    .address {
        flex: 1;
        gap: 9px;
        padding-left: 2px;
        white-space: nowrap;
    }
    .address .icon {
        width: 16px;
        height: 16px;
    }
    .crumb-arrow {
        border: 4px solid transparent;
        border-left-color: #000;
        border-right: none;
    }
    .history {
        width: 20px;
        height: 21px;
        margin-left: auto;
    }
    .history svg,
    .view svg {
        width: 8px;
        height: 5px;
    }
    .refresh {
        width: 25px;
        height: 21px;
        margin-left: -9px;
        border-left: 1px solid #59677a;
    }
    .refresh svg {
        width: 15px;
        height: 14px;
    }
    .search {
        width: 242px;
        margin: 0 1px 0 6px;
        padding: 0 5px 0 8px;
    }
    .search input {
        flex: 1;
        min-width: 0;
        padding: 0;
        border: none;
        outline: none;
        background: none;
        font: italic 12px "Open Sans", sans-serif;
    }
    .search input::placeholder {
        color: #6b717b;
    }
    .search svg {
        width: 13px;
        height: 13px;
    }

    .heading {
        display: flex;
        align-items: center;
        justify-content: space-between;
        height: 60px;
        padding: 0 84px 0 17px;
        background:
            linear-gradient(75deg, transparent 9%, rgba(255, 255, 255, 0.7) 10%, rgba(255, 255, 255, 0.7) 13%, transparent 15%, transparent 21%, rgba(255, 255, 255, 0.6) 22%, rgba(255, 255, 255, 0.6) 26%, transparent 29%),
            linear-gradient(#eaf0fb, #fff 80%);
        border-bottom: 1px solid;
        border-image: linear-gradient(90deg, #fff, #d5e3f5 1%, #d5e3f5 99%, #fff) 1;
    }
    h1 {
        margin: 0;
        font-size: 15px;
        font-weight: 400;
        color: #003399;
    }
    .view {
        display: flex;
        align-items: center;
        color: #5a6780;
    }
    .view select {
        field-sizing: content;
        appearance: none;
        margin: 0 6px 0 14px;
        padding: 0;
        border: none;
        background: none;
        font: inherit;
        color: #0066cc;
    }

    main {
        flex: 1;
        padding: 24px 15px;
    }
    .applets {
        display: grid;
        grid-template-columns: repeat(5, 243px);
        grid-auto-rows: 50px;
        column-gap: 7px;
        margin: 0;
        padding: 0;
        list-style: none;
    }
    .applets li {
        position: relative;
    }
    .applets a {
        display: flex;
        align-items: center;
        gap: 11px;
        box-sizing: border-box;
        height: 50px;
        padding: 2px 3px 0;
        border: 1px solid transparent;
        border-radius: 3px;
        font-size: 15px;
        line-height: 21px;
        color: #0b6b12;
        white-space: pre;
    }
    .applets .long .label {
        align-self: flex-start;
    }
    .applets .hovered a {
        border-color: #b8d6fb;
        background: linear-gradient(#fcfdff, #edf4fd);
        color: #12ad2a;
    }
    .hovered .label {
        text-decoration: underline;
    }
    .tooltip {
        position: absolute;
        top: 47px;
        left: 83px;
        z-index: 1;
        padding: 2px 10px 1px 5px;
        border: 1px solid #767676;
        border-radius: 3px;
        background: linear-gradient(#fff, #e4e5f0);
        box-shadow: 3px 3px 2px rgba(0, 0, 0, 0.5);
        line-height: 15px;
        color: #575757;
        white-space: nowrap;
    }

    .taskbar {
        display: flex;
        align-items: center;
        height: 39px;
        border-top: 1px solid #22364f;
        box-shadow: inset 0 1px 0 #a9bccf;
        background:
            linear-gradient(85deg, transparent 63%, #8c9fb8 65%, #9cafc2 68%, #8599b0 71%, #91a6bd 78%, #8399b1 84%, #93a8c0 90%, #6f8196 93%, #66788c 100%),
            linear-gradient(90deg, #708196 0, #75879d 3%, #8aa5c5 8%, #8aa5c5 15%, #5f7a9b 19%, #34506f 23%, #1d3557 30%, #1f3a5d 45%, #2d517d 53%, #1b3557 62%);
        color: #fff;
    }
    .start {
        width: 54px;
    }
    .start svg {
        width: 36px;
        height: 36px;
    }
    .grip {
        width: 8px;
        height: 31px;
        margin: 0 10px 0 4px;
        background: conic-gradient(#2d3a4a 25%, transparent 0) 0 0 / 3px 4px;
    }
    .tasks {
        display: flex;
        flex: 1;
        gap: 4px;
    }
    .task {
        box-sizing: border-box;
        width: 58px;
        height: 37px;
        border: 1px solid #d0dae5;
        border-radius: 3px;
        outline: 1px solid #35465c;
    }
    .light {
        background: linear-gradient(135deg, #c5ced9, #8fa3bb 45%, #a7bad0);
    }
    .dark {
        border-color: #8b9bb0;
        background: linear-gradient(135deg, #8d9aab, #45566e 50%, #33465f);
    }
    .active {
        border-color: #fff;
        background: linear-gradient(135deg, #ccd3dc, #8494a9 50%, #a5b3c5);
    }
    .flat {
        border-color: transparent;
        outline: none;
    }
    .stack {
        width: 55px;
        margin-right: 3px;
        box-shadow:
            2px 0 0 #35465c,
            3px 0 0 #9aa9bb;
    }
    .lang {
        width: 30px;
        padding-bottom: 6px;
    }
    .hidden-icons {
        width: 10px;
    }
    .hidden-icons svg {
        width: 10px;
        height: 6px;
    }
    .clock {
        display: flex;
        flex-direction: column;
        align-items: center;
        width: 80px;
        line-height: 17px;
    }
    .show-desktop {
        box-sizing: border-box;
        width: 15px;
        height: 38px;
        border: 1px solid #b5c3d1;
        background: linear-gradient(120deg, #8d9cae, #51647a);
    }
</style>
